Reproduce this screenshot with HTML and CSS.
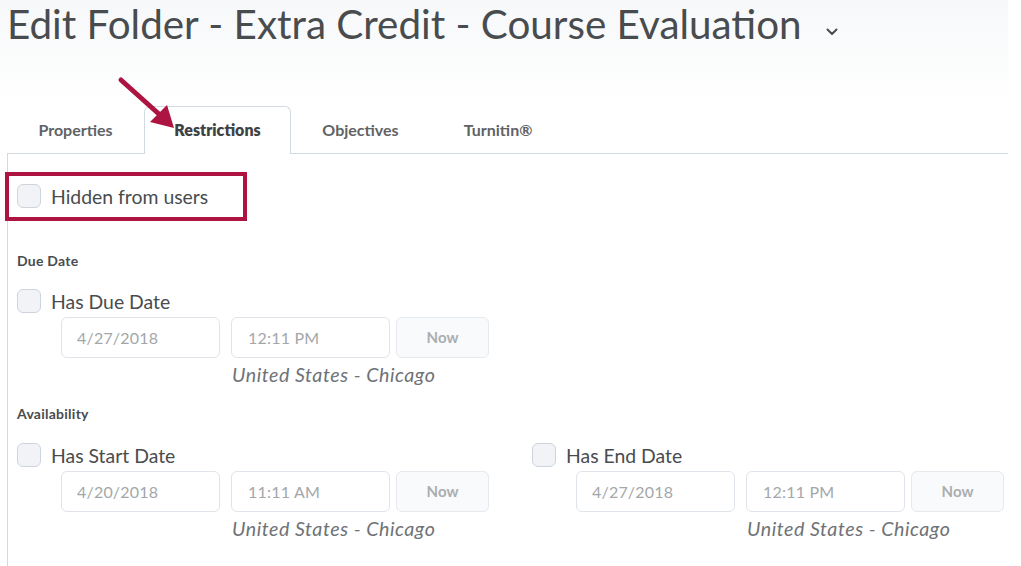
FILE: index.html
```html
<!DOCTYPE html>
<html lang="en">
<head>
<meta charset="utf-8">
<title>Edit Folder</title>
<link rel="stylesheet" href="styles.css">
</head>
<body>
<div class="page">
  <div class="header">
    <h1 class="title">Edit Folder - Extra Credit - Course Evaluation<svg class="chev" width="12" height="8" viewBox="0 0 12 8"><path d="M1.5 1.5 L6 6 L10.5 1.5" fill="none" stroke="#494c4e" stroke-width="2" stroke-linecap="round" stroke-linejoin="round"/></svg></h1>
    <div class="tabs">
      <div class="tab tab-1">Properties</div>
      <div class="tab tab-2 active">Restrictions</div>
      <div class="tab tab-3">Objectives</div>
      <div class="tab tab-4">Turnitin®</div>
    </div>
  </div>

  <div class="panel">
    <div class="check-row hidden-row">
      <span class="checkbox"></span>
      <span class="check-label">Hidden from users</span>
      <span class="annot-box"></span>
    </div>

    <div class="section-title first">Due Date</div>
    <div class="cols">
      <div class="col">
        <div class="check-row"><span class="checkbox"></span><span class="check-label">Has Due Date</span></div>
        <div class="inputs">
          <div class="field date">4/27/2018</div>
          <div class="field time">12:11 PM</div>
          <div class="btn-now">Now</div>
        </div>
        <div class="tz">United States - Chicago</div>
      </div>
    </div>

    <div class="section-title">Availability</div>
    <div class="cols">
      <div class="col">
        <div class="check-row"><span class="checkbox"></span><span class="check-label">Has Start Date</span></div>
        <div class="inputs">
          <div class="field date">4/20/2018</div>
          <div class="field time">11:11 AM</div>
          <div class="btn-now">Now</div>
        </div>
        <div class="tz">United States - Chicago</div>
      </div>
      <div class="col">
        <div class="check-row"><span class="checkbox"></span><span class="check-label">Has End Date</span></div>
        <div class="inputs">
          <div class="field date">4/27/2018</div>
          <div class="field time">12:11 PM</div>
          <div class="btn-now">Now</div>
        </div>
        <div class="tz">United States - Chicago</div>
      </div>
    </div>
  </div>

  <svg class="arrow" width="200" height="140" viewBox="0 0 200 140">
    <line x1="121" y1="80" x2="160" y2="115" stroke="#ad1442" stroke-width="5" stroke-linecap="round"/>
    <polygon points="174,128 150,122 167,105" fill="#ad1442"/>
  </svg>
</div>
</body>
</html>
```

FILE: styles.css
```css
html, body {
  margin: 0;
  padding: 0;
  background: #ffffff;
}

body {
  font-family: Lato, "Open Sans", "Liberation Sans", sans-serif;
  color: #494c4e;
}

.page {
  position: relative;
  width: 1008px;
  height: 566px;
  overflow: hidden;
}

.header {
  background: linear-gradient(to bottom, #f7f8fa 0, #fbfcfc 60px, #ffffff 100px);
}

.title {
  margin: 0;
  padding-left: 7px;
  font-size: 40.4px;
  font-weight: 400;
  line-height: 47px;
  height: 47px;
  color: #494c4e;
  white-space: nowrap;
}

.chev {
  margin-left: 24px;
  vertical-align: 3px;
}

.tabs {
  display: flex;
  margin-top: 59px;
  margin-left: 7px;
  border-bottom: 1px solid #d3d9e3;
  height: 47px;
}

.tab {
  box-sizing: border-box;
  height: 47px;
  padding-top: 13px;
  border: 1px solid transparent;
  border-bottom: none;
  text-align: center;
  font-size: 16px;
  line-height: 19px;
  font-weight: 700;
  color: #5f6366;
}

.tab-1 { width: 137px; }
.tab-2 { width: 147px; }
.tab-3 { width: 139px; }
.tab-4 { width: 136px; }

.tab.active {
  height: 48px;
  border-color: #d3d9e3;
  border-radius: 6px 6px 0 0;
  background: #ffffff;
  color: #3f4244;
  font-weight: 800;
}

.panel {
  margin-left: 7px;
  border-left: 1px solid #d3d9e3;
  padding-left: 9px;
  padding-top: 30px;
  height: 420px;
}

.check-row {
  position: relative;
  display: flex;
  align-items: center;
  height: 24px;
}

.checkbox {
  box-sizing: border-box;
  width: 24px;
  height: 24px;
  border: 1px solid #cdd4de;
  border-radius: 6px;
  background: #f1f3f6;
  flex: none;
}

.check-label {
  margin-left: 10px;
  font-size: 19.4px;
  line-height: 23px;
  color: #494c4e;
}

.annot-box {
  position: absolute;
  left: -12px;
  top: -12px;
  width: 242px;
  height: 49px;
  box-sizing: border-box;
  border: 4px solid #ad1442;
}

.section-title {
  font-size: 14px;
  line-height: 16px;
  letter-spacing: 0.25px;
  font-weight: 700;
  color: #494c4e;
  margin-top: 20px;
  margin-bottom: 21px;
}

.section-title.first {
  margin-top: 45px;
  margin-bottom: 20px;
}

.cols {
  display: grid;
  grid-template-columns: 515px auto;
}

.inputs {
  display: flex;
  margin-top: 4px;
  margin-left: 44px;
  height: 41px;
}

.field {
  box-sizing: border-box;
  width: 159px;
  height: 41px;
  border: 1px solid #dfe4ea;
  border-radius: 6px;
  background: #ffffff;
  padding-left: 15px;
  font-size: 16px;
  line-height: 39px;
  letter-spacing: 0.2px;
  color: #a3a7aa;
}

.field.time {
  margin-left: 11px;
  padding-left: 16px;
}

.btn-now {
  box-sizing: border-box;
  width: 93px;
  height: 41px;
  margin-left: 6px;
  border: 1px solid #e6e9ed;
  border-radius: 6px;
  background: #f9fafb;
  text-align: center;
  font-size: 15px;
  font-weight: 700;
  line-height: 39px;
  color: #abaeb1;
}

.tz {
  margin-left: 215px;
  margin-top: 5px;
  font-size: 19.6px;
  line-height: 23px;
  letter-spacing: 0.55px;
  font-style: italic;
  color: #6e7276;
}

.arrow {
  position: absolute;
  left: 0;
  top: 0;
}
```
